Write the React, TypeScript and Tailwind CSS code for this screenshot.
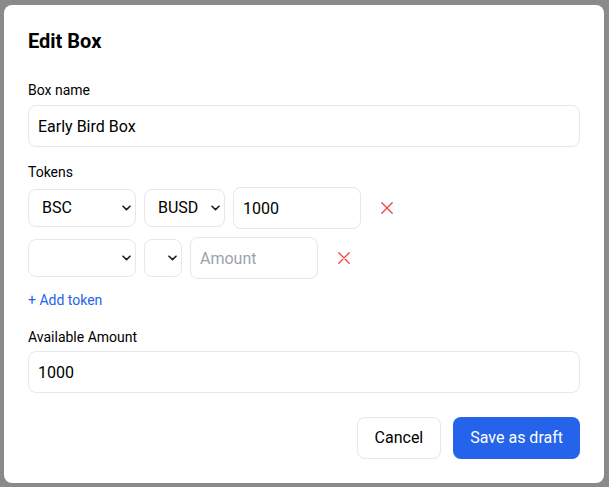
import React from "react";

const font = { fontFamily: "Roboto, 'Liberation Sans', sans-serif" };

const Chevron: React.FC = () => (
  <svg
    className="pointer-events-none absolute right-[5px] top-1/2 -translate-y-1/2"
    width="9"
    height="6"
    viewBox="0 0 9 6"
    fill="none"
  >
    <path d="M1 1.2 L4.5 4.6 L8 1.2" stroke="#1f1f1f" strokeWidth="1.6" strokeLinecap="round" strokeLinejoin="round" />
  </svg>
);

const Select: React.FC<{ width: string; value: string }> = ({ width, value }) => (
  <div className={`relative ${width}`}>
    <select
      defaultValue={value}
      className="h-[38px] w-full appearance-none rounded-lg border border-[#e5e7eb] bg-white pl-[13px] pr-5 text-base text-black outline-none"
    >
      <option value={value}>{value}</option>
    </select>
    <Chevron />
  </div>
);

const RemoveButton: React.FC = () => (
  <button className="flex h-[42px] items-center px-3" aria-label="Remove token">
    <svg width="12" height="12" viewBox="0 0 12 12" fill="none">
      <path d="M0.8 0.8 L11.2 11.2 M11.2 0.8 L0.8 11.2" stroke="#ef4444" strokeWidth="1.3" strokeLinecap="round" />
    </svg>
  </button>
);

export default function App() {
  return (
    <div className="min-h-[487px] bg-[#8a8a8a] pl-[4px] pt-[5px]" style={font}>
      <div className="w-[600px] rounded-lg bg-white p-6">
        <h2 className="mb-[27px] text-xl font-bold leading-6 text-black">Edit Box</h2>

        {/* Box name */}
        <div className="mb-[15px]">
          <label className="mb-[5px] block text-sm leading-5 text-black">Box name</label>
          <input
            defaultValue="Early Bird Box"
            className="h-[42px] w-full rounded-lg border border-[#e5e7eb] px-[9px] text-base text-black outline-none"
          />
        </div>

        {/* Tokens */}
        <div className="mb-[15px]">
          <label className="mb-[5px] block text-sm leading-5 text-black">Tokens</label>
          <div className="space-y-2">
            <div className="flex items-center gap-2">
              <Select width="w-[108px]" value="BSC" />
              <Select width="w-[81px]" value="BUSD" />
              <input
                defaultValue="1000"
                className="h-[42px] w-[128px] rounded-lg border border-[#e5e7eb] px-[9px] text-base text-black outline-none"
              />
              <RemoveButton />
            </div>
            <div className="flex items-center gap-2">
              <Select width="w-[108px]" value="" />
              <Select width="w-[38px]" value="" />
              <input
                placeholder="Amount"
                className="h-[42px] w-[128px] rounded-lg border border-[#e5e7eb] px-[9px] text-base text-black outline-none placeholder:text-[#9ca3af]"
              />
              <RemoveButton />
            </div>
          </div>
          <button className="mt-[9px] py-[2px] text-sm leading-5 text-[#2563eb]">+ Add token</button>
        </div>

        {/* Available Amount */}
        <div>
          <label className="mb-1 block text-sm leading-5 text-black">Available Amount</label>
          <input
            defaultValue="1000"
            className="h-[42px] w-full rounded-lg border border-[#e5e7eb] px-[9px] text-base text-black outline-none"
          />
        </div>

        <div className="mt-6 flex justify-end gap-3">
          <button className="h-[42px] rounded-lg border border-[#e5e7eb] bg-white px-[17px] text-base text-black">
            Cancel
          </button>
          <button className="h-[42px] rounded-lg bg-[#2563eb] px-[17px] text-base text-white">
            Save as draft
          </button>
        </div>
      </div>
    </div>
  );
}
